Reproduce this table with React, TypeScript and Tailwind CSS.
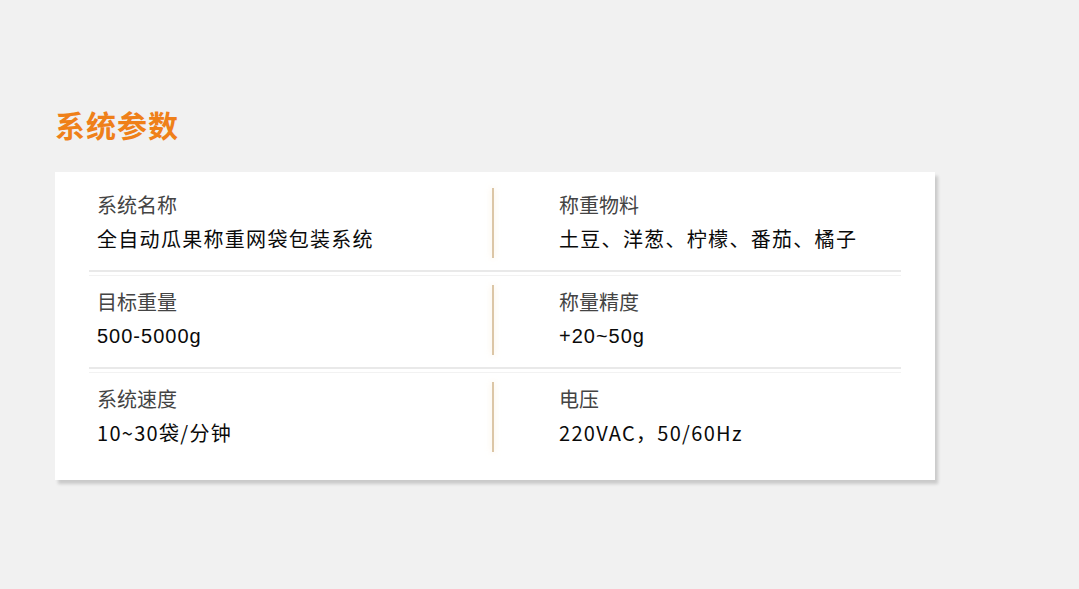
import React from 'react'

type Spec = {
  label: string
  value: string
  latin?: boolean
}

const rows: [Spec, Spec][] = [
  [
    { label: '系统名称', value: '全自动瓜果称重网袋包装系统' },
    { label: '称重物料', value: '土豆、洋葱、柠檬、番茄、橘子' },
  ],
  [
    { label: '目标重量', value: '500-5000g', latin: true },
    { label: '称量精度', value: '+20~50g', latin: true },
  ],
  [
    { label: '系统速度', value: '10~30袋/分钟' },
    { label: '电压', value: '220VAC，50/60Hz' },
  ],
]

const cjk = "font-['Noto_Sans_CJK_SC',sans-serif]"
const latinFont = "font-['Liberation_Sans','Noto_Sans_CJK_SC',sans-serif]"

function Cell({ spec }: { spec: Spec }) {
  return (
    <div className="flex flex-col">
      <div className={`mt-[3px] text-[20px] leading-[28px] text-[#444444] ${cjk}`}>{spec.label}</div>
      <div
        className={`mt-[6px] text-[20px] leading-[28px] text-[#0a0a0a] ${
          spec.latin ? `${latinFont} tracking-[1px]` : `${cjk} tracking-[1.3px]`
        }`}
      >
        {spec.value}
      </div>
    </div>
  )
}

export default function App() {
  return (
    <div className="min-h-screen w-full bg-[#f1f1f1] pt-[104px] pl-[55px]">
      {/* Title */}
      <h2 className={`text-[30px] leading-[40px] font-bold tracking-[1px] text-[#ef8019] ${cjk}`}>系统参数</h2>

      {/* Parameter card */}
      <div className="mt-[28px] w-[880px] bg-white pt-4 pb-[28px] shadow-[3px_4px_3px_rgba(0,0,0,0.16)]">
        {rows.map((pair, i) => (
          <div key={i}>
            <div className="flex h-[70px]">
              <div className="w-[437px] pl-[42px]">
                <Cell spec={pair[0]} />
              </div>
              <div className="w-[2px] h-full bg-[#dcc6a6] shadow-[0_0_6px_rgba(245,222,180,0.6)]" />
              <div className="pl-[65px]">
                <Cell spec={pair[1]} />
              </div>
            </div>
            {i < rows.length - 1 && (
              <div className="mx-[34px] mt-3 mb-[9px] flex flex-col">
                <div className="h-[2px] bg-[#e9e9e9]" />
                <div className="mt-[3px] h-px bg-[#f2f2f2]" />
              </div>
            )}
          </div>
        ))}
      </div>
    </div>
  )
}
